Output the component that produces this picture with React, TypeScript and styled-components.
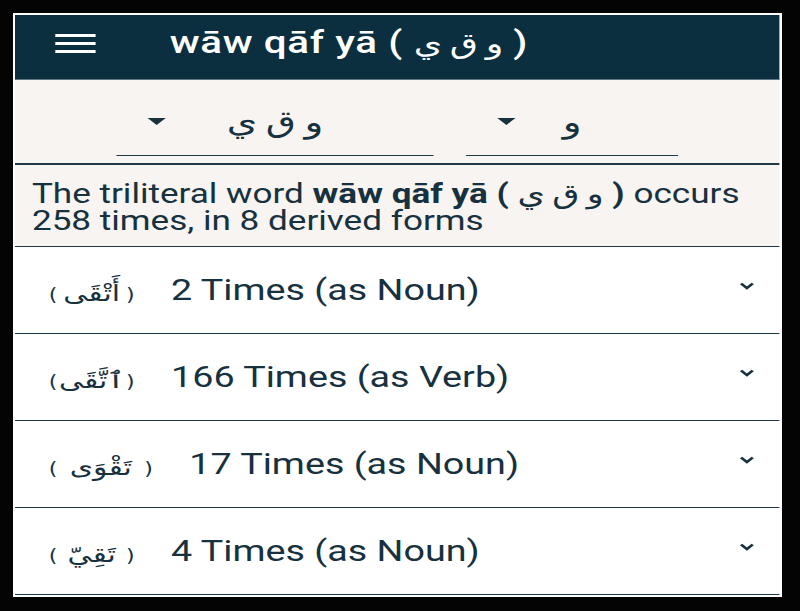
import styled, { createGlobalStyle } from 'styled-components'

// the reference screen is stretched sideways, so the screen is laid out narrow and widened once
const STRETCH = 1.3

const GlobalStyle = createGlobalStyle`
  html, body {
    margin: 0;
    padding: 0;
    background: #040404;
  }
  body {
    width: 800px;
    height: 611px;
    overflow: hidden;
    font-family: Roboto, "Liberation Sans", sans-serif;
  }
`

const Frame = styled.div`
  margin: 13px 0 0 13px;
  width: 765px;
  height: 580px;
  border: 2px solid #ffffff;
  background: #ffffff;
  overflow: hidden;
`

const Screen = styled.div`
  width: 588px;
  height: 580px;
  display: flex;
  flex-direction: column;
  transform: scaleX(${STRETCH});
  transform-origin: left top;
`

const Header = styled.header`
  height: 65px;
  flex-shrink: 0;
  box-sizing: border-box;
  background: #0c2f3f;
  border-bottom: 1px solid #5f7884;
  display: flex;
  align-items: center;
  padding-left: 31px;
  gap: 57px;
`

const Burger = styled.div`
  width: 31px;
  display: flex;
  flex-direction: column;
  gap: 5px;
  margin-top: -8px;

  span {
    display: block;
    height: 3px;
    background: #ffffff;
  }
`

const Title = styled.h1`
  margin: 0 0 10px;
  color: #ffffff;
  font-family: Roboto, "Liberation Sans", sans-serif;
  font-weight: 500;
  font-size: 31px;
  letter-spacing: 0.5px;
  white-space: nowrap;
`

const Arabic = styled.span<{ $size?: number }>`
  unicode-bidi: isolate;
  font-family: "DejaVu Sans", serif;
  font-weight: 400;
  letter-spacing: 0;
  word-spacing: -3px;
  ${(p) => (p.$size ? `font-size: ${p.$size}px;` : '')}
`

const Filters = styled.div`
  height: 85px;
  flex-shrink: 0;
  box-sizing: border-box;
  background: #f7f4f1;
  border-bottom: 2px solid #1f3946;
  display: flex;
  justify-content: center;
  gap: 25px;
  padding-top: 20px;
`

const Dropdown = styled.div<{ $width: number }>`
  width: ${(p) => p.$width}px;
  height: 55px;
  border-bottom: 1.5px solid #1f3946;
  display: grid;
  grid-template-columns: 46px 1fr 46px;
  align-items: center;
`

const Caret = styled.span`
  justify-self: start;
  margin: -12px 0 0 24px;
  width: 0;
  height: 0;
  border-left: 7px solid transparent;
  border-right: 7px solid transparent;
  border-top: 7px solid #17313e;
`

const DropValue = styled.span`
  justify-self: center;
  font-family: "DejaVu Sans", serif;
  font-size: 30px;
  word-spacing: -3px;
  color: #17313e;
  direction: rtl;
  margin-top: -12px;
`

const Summary = styled.div`
  height: 82px;
  flex-shrink: 0;
  box-sizing: border-box;
  background: #f7f4f1;
  border-bottom: 1.5px solid #1f3946;
  padding: 15px 10px 0 13px;
  color: #17313e;
  font-size: 27px;
  line-height: 27px;
`

const SummaryLine = styled.div`
  white-space: nowrap;

  b {
    font-weight: 700;
  }
`

const Row = styled.div`
  height: 87px;
  flex-shrink: 0;
  box-sizing: border-box;
  border-bottom: 1.5px solid #1f3946;
  display: flex;
  align-items: center;
  padding: 0 19px 0 26px;
  gap: 28px;
`

const Word = styled.span<{ $width: number }>`
  width: ${(p) => p.$width}px;
  display: flex;
  align-items: center;
  justify-content: space-between;
  font-family: "DejaVu Sans", serif;
  color: #17313e;
  white-space: nowrap;
  margin-top: 6px;
`

const Paren = styled.span`
  font-size: 17px;
  margin-top: 4px;
`

const WordText = styled.span`
  font-size: 23px;
  direction: rtl;
`

const Count = styled.span`
  flex: 1;
  color: #17313e;
  font-size: 29px;
  white-space: nowrap;
`

const Chevron = styled.svg`
  width: 12px;
  height: 10px;
  margin-top: -8px;
`

const forms = [
  { word: 'أَتْقَى', label: '2 Times (as Noun)', width: 66 },
  { word: 'ٱتَّقَى', label: '166 Times (as Verb)', width: 66 },
  { word: 'تَقْوَى', label: '17 Times (as Noun)', width: 80 },
  { word: 'تَقِيّ', label: '4 Times (as Noun)', width: 66 },
]

function App() {
  return (
    <>
      <GlobalStyle />
      <Frame>
        <Screen>
          <Header>
            <Burger>
              <span />
              <span />
              <span />
            </Burger>
            <Title>
              wāw qāf yā ( <Arabic $size={28}>و ق ي</Arabic> )
            </Title>
          </Header>

          <Filters>
            <Dropdown $width={244}>
              <Caret />
              <DropValue>و ق ي</DropValue>
              <span />
            </Dropdown>
            <Dropdown $width={163}>
              <Caret />
              <DropValue>و</DropValue>
              <span />
            </Dropdown>
          </Filters>

          <Summary>
            <SummaryLine>
              The triliteral word <b>wāw qāf yā (</b> <Arabic>و ق ي</Arabic> <b>)</b> occurs
            </SummaryLine>
            <SummaryLine>258 times, in 8 derived forms</SummaryLine>
          </Summary>

          {forms.map((f) => (
            <Row key={f.label}>
              <Word $width={f.width}>
                <Paren>(</Paren>
                <WordText>{f.word}</WordText>
                <Paren>)</Paren>
              </Word>
              <Count>{f.label}</Count>
              <Chevron viewBox="0 0 12 10">
                <path d="M1.5 2.5 L6 7 L10.5 2.5" fill="none" stroke="#17313e" strokeWidth="2.4" />
              </Chevron>
            </Row>
          ))}
        </Screen>
      </Frame>
    </>
  )
}

export default App
